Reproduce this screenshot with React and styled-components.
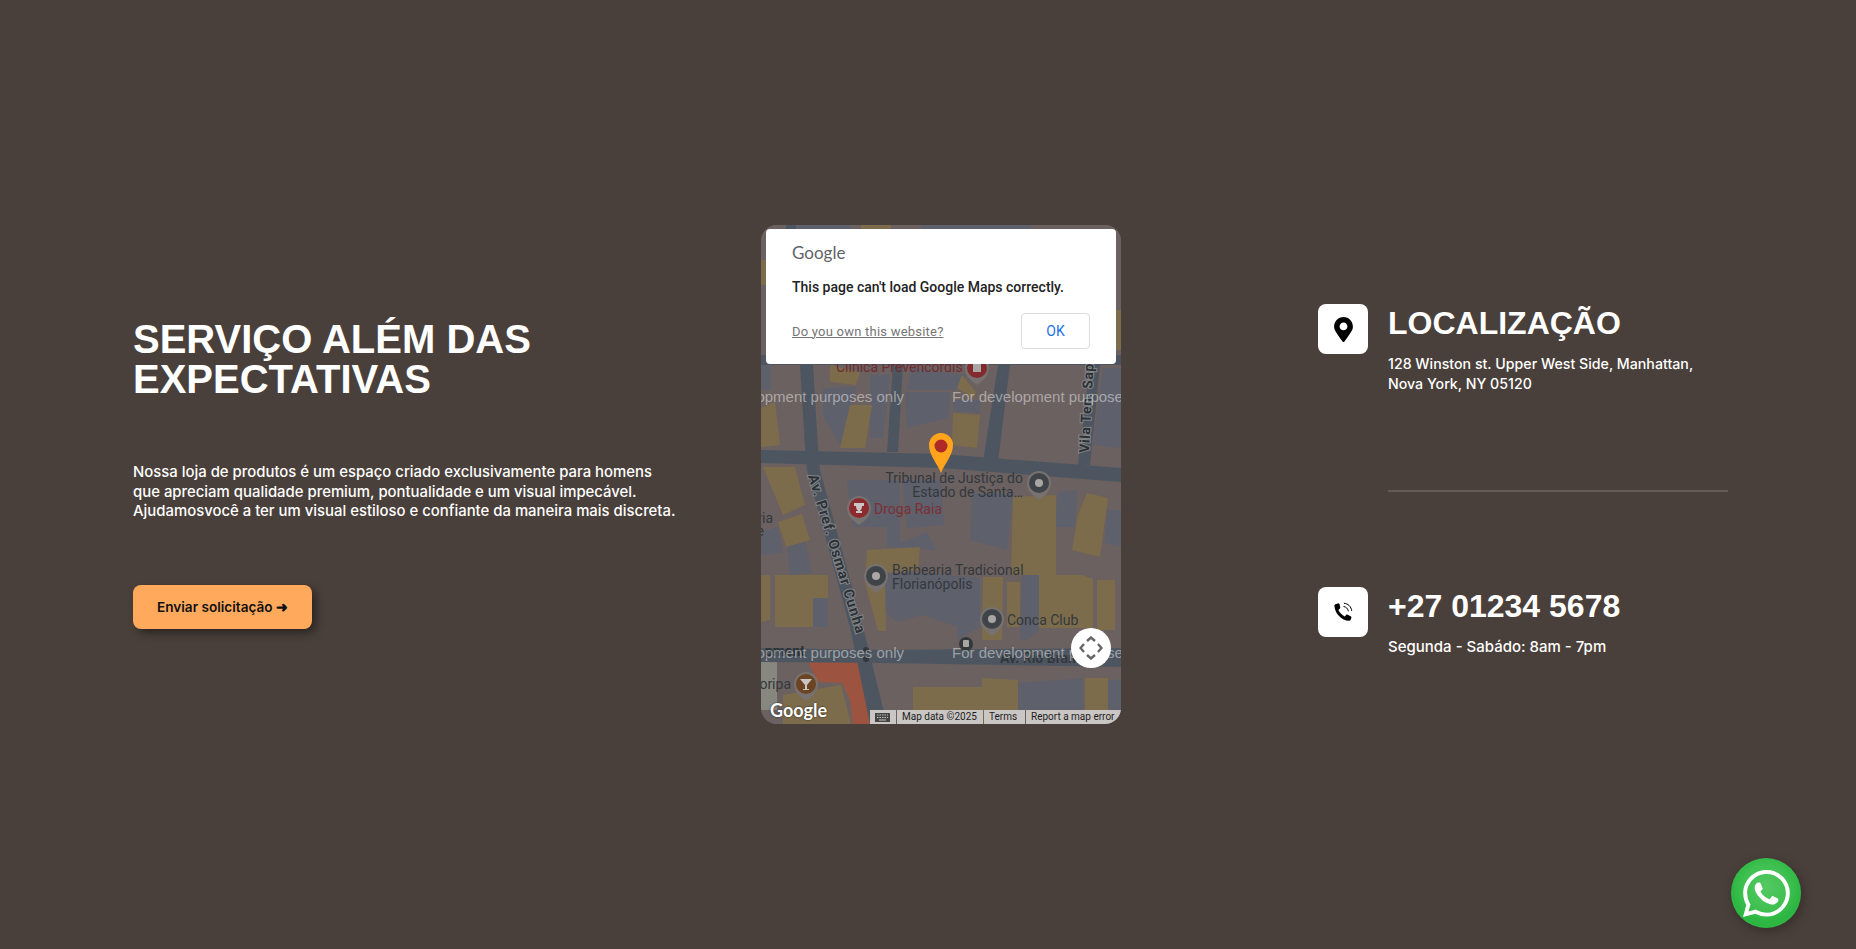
import React from "react";
import styled, { createGlobalStyle } from "styled-components";
import { FaMapMarkerAlt } from "react-icons/fa";
import { BsWhatsapp } from "react-icons/bs";

const Global = createGlobalStyle`
  html, body { margin: 0; padding: 0; background: #4a403b; }
  * { box-sizing: border-box; }
`;

const Page = styled.main`
  height: 949px;
  overflow: hidden;
  display: flex;
  align-items: center;
  padding-left: 133px;
  background: #4a403b;
  color: #fff;
  font-family: Inter, "Open Sans", sans-serif;
  position: relative;
`;

const Intro = styled.section`
  width: 628px;
  flex: none;
  padding-bottom: 1px;
`;

const Headline = styled.h1`
  margin: 0 0 64px;
  font: 700 40px/40px "Liberation Sans", Arial, sans-serif;
  color: #fff;
`;

const Lead = styled.p`
  margin: 0 0 63px;
  width: 600px;
  font-size: 14.9px;
  line-height: 19.5px;
  font-weight: 500;
`;

const Cta = styled.button`
  display: block;
  width: 179px;
  height: 44px;
  padding: 0;
  border: 0;
  border-radius: 8px;
  background: #ffa95c;
  color: #111;
  font: 600 13.6px Inter, sans-serif;
  box-shadow: 4px 4px 10px rgba(0, 0, 0, 0.45);
`;

const MapFrame = styled.div`
  position: relative;
  flex: none;
  width: 360px;
  height: 499px;
  border-radius: 16px;
  overflow: hidden;
  background: #6b6160;
`;

const MapArt = styled.svg`
  display: block;
  width: 360px;
  height: 500px;
`;

const MapLabel = styled.text`
  font-family: Roboto, sans-serif;
  font-size: ${(p) => p.$size || 14}px;
  font-weight: ${(p) => p.$weight || 400};
  letter-spacing: ${(p) => p.$track || 0}px;
  fill: ${(p) => p.$color || "#33383d"};
  stroke: ${(p) => p.$halo || "none"};
  stroke-width: ${(p) => (p.$halo ? 2 : 0)}px;
  paint-order: stroke;
`;

const Watermark = styled.text`
  font-family: "Liberation Sans", Arial, sans-serif;
  font-size: 15px;
  fill: rgba(255, 255, 255, 0.45);
`;

const Dialog = styled.div`
  position: absolute;
  left: 5px;
  top: 4px;
  width: 350px;
  height: 135px;
  padding: 12px 26px 0;
  background: #fff;
  border-radius: 4px;
  font-family: Roboto, sans-serif;
`;

const DialogLogo = styled.div`
  font: 400 17px/24px Lato, "Open Sans", sans-serif;
  color: #5f6368;
`;

const DialogMessage = styled.div`
  margin-top: 12px;
  font-size: 14px;
  line-height: 20px;
  font-weight: 500;
  color: #222;
`;

const DialogFoot = styled.div`
  margin-top: 16px;
  display: flex;
  align-items: center;
  justify-content: space-between;
`;

const DialogLink = styled.a`
  font-size: 13px;
  letter-spacing: 0.22px;
  color: #757575;
  text-decoration: underline;
`;

const OkButton = styled.button`
  width: 69px;
  height: 36px;
  background: #fff;
  border: 1px solid #dadce0;
  border-radius: 4px;
  color: #1a73e8;
  font: 400 14px Roboto, sans-serif;
`;

const MoveControl = styled.div`
  position: absolute;
  left: 310px;
  top: 403px;
  width: 40px;
  height: 40px;
  border-radius: 50%;
  background: #fff;
  display: flex;
  align-items: center;
  justify-content: center;
`;

const MapLogo = styled.div`
  position: absolute;
  left: 9px;
  bottom: 3px;
  font: 700 18px/22px Lato, "Open Sans", sans-serif;
  color: #fff;
  text-shadow: 0 0 2px rgba(0, 0, 0, 0.7);
`;

const Attribution = styled.div`
  position: absolute;
  right: 0;
  bottom: 0;
  height: 14px;
  display: flex;
  gap: 1px;
`;

const AttrCell = styled.div`
  width: ${(p) => p.$w}px;
  padding-left: ${(p) => p.$pad ?? 5}px;
  display: flex;
  align-items: center;
  background: #cac6c3;
  color: #1d1d1d;
  font: 400 10px/14px Roboto, sans-serif;
  white-space: nowrap;
`;

const Contact = styled.section`
  flex: none;
  align-self: stretch;
  width: 410px;
  margin-left: 197px;
  padding-top: 304px;
`;

const Row = styled.div`
  display: flex;
  gap: 20px;
  height: ${(p) => p.$h}px;
`;

const IconBox = styled.div`
  flex: none;
  width: 50px;
  height: 50px;
  border-radius: 8px;
  background: #fff;
  color: #000;
  display: flex;
  align-items: center;
  justify-content: center;
`;

const RowTitle = styled.h2`
  margin: ${(p) => p.$top}px 0 ${(p) => p.$gap}px;
  font: 700 32px/36px "Liberation Sans", Arial, sans-serif;
  color: #fff;
`;

const RowText = styled.p`
  margin: 0;
  font-size: ${(p) => p.$size}px;
  line-height: 19.5px;
  font-weight: 500;
`;

const Divider = styled.hr`
  width: 340px;
  height: 2px;
  margin: 0 0 95px 70px;
  border: 0;
  background: #645b56;
`;

const Whats = styled.a`
  position: absolute;
  left: 1731px;
  top: 858px;
  width: 70px;
  height: 70px;
  border-radius: 50%;
  background: radial-gradient(circle at 50% 42%, #54c962 0%, #3fc051 42%, #2db742 64%);
  color: #fff;
  display: flex;
  align-items: center;
  justify-content: center;
  box-shadow: 2px 3px 12px rgba(0, 0, 0, 0.3);
`;

const yellow = [
  "2,242 34,242 44,280 22,290", "17,297 41,289 49,315 25,322", "14,350 67,350 67,373 52,373 52,402 14,402",
  "0,350 9,350 9,395 0,397", "106,325 159,322 157,345 124,348 125,406 117,406 104,358",
  "252,272 295,270 295,350 321,350 332,354 332,403 278,403 278,350 250,350", "326,268 347,273 339,332 311,325 317,290",
  "336,355 354,355 354,405 336,405", "222,352 242,352 241,415 221,415", "246,357 259,357 259,402 246,402",
  "152,462 221,462 221,453 257,455 257,499 152,499", "324,453 347,453 347,485 324,485", "22,470 80,460 90,499 22,499",
  "69,140 99,147 95,160 69,157", "201,150 215,167 212,173 196,163", "192,188 219,190 216,223 191,220",
  "89,180 111,180 104,223 79,223", "0,183 14,177 19,220 0,222", "0,35 5,35 5,60 0,60", "355,85 360,85 360,125 355,125",
  "100,0 130,0 130,5 100,5",
];
const blue = [
  "86,255 139,255 139,318 166,307 175,325 126,322 126,302 92,302", "141,255 180,255 183,300 146,303",
  "211,268 252,268 246,325 209,315", "297,267 316,265 314,302 294,302", "346,285 360,285 360,322 344,318",
  "26,322 44,317 51,348 29,350", "0,307 17,302 22,328 0,330", "52,373 67,373 67,402 52,402",
  "124,348 166,348 219,353 219,402 196,415 196,402 162,390 136,397 124,387", "261,348 279,348 278,405 266,415 259,415",
  "257,458 322,453 322,485 257,485", "347,455 360,455 360,485 347,485", "62,163 96,162 79,220 62,190",
  "109,150 129,150 122,213 109,213", "144,167 189,167 187,193 146,203", "192,175 219,175 219,188 192,186",
  "342,143 360,143 360,223 332,220", "150,143 205,150 195,165 146,165", "0,140 10,140 10,165 0,165",
  "30,0 90,0 90,5 30,5", "160,0 270,0 270,5 160,5",
];
const roads = [
  "0,225 180,229 360,243 360,257 180,243 0,238", "0,423 120,425 360,423 360,442 120,438 0,437",
  "39,140 52,140 57,223 59,245 102,402 126,499 109,499 89,402 46,245 44,223",
  "132,140 142,140 137,227 126,227", "237,140 249,140 237,237 222,237", "329,140 339,140 329,240 317,240",
  "0,130 360,130 360,140 0,140", "25,0 35,0 35,5 25,5",
];

const Pin = ({ x, y, fill = "#3f4449", children }) => (
  <g transform={`translate(${x} ${y})`}>
    <path d="M0 17 C-3 14 -12 10 -12 0 A12 12 0 1 1 12 0 C12 10 3 14 0 17Z" fill="#77716f" />
    <circle r="10" fill={fill} />
    {children || <circle r="4" fill="#aaa6a3" />}
  </g>
);

const Chevrons = () => (
  <svg width="24" height="24" viewBox="0 0 24 24" fill="none" stroke="#666" strokeWidth="2.4">
    <path d="M8 5 12 1.500 16 5M8 19 12 22.500 16 19M5 8 1.500 12 5 16M19 8 22.500 12 19 16" />
  </svg>
);

const PhoneGlyph = () => (
  <svg width="24" height="24" viewBox="0 0 24 24">
    <path
      d="M19.6 16.2l-3-1.5c-.5-.3-1.1-.2-1.5.2l-1.3 1.5c-2.7-1.4-5.2-3.9-6.4-6.5l1.5-1.3c.4-.4.5-1 .3-1.5L8.5 4.1c-.3-.6-1-.9-1.6-.7L4.4 4.3c-.7.3-1.1.9-1 1.6C4 13.5 10.400 20.200 18.100 20.800c.7 0 1.300-.4 1.600-1l.7-2c.2-.6-.2-1.300-.8-1.600z"
      fill="#000"
    />
    <path d="M12.500 6.500c2.500.2 4.600 2.300 4.800 4.800M13 3.300c4 .2 7.400 3.500 7.700 7.600" fill="none" stroke="#000" strokeWidth="1" />
  </svg>
);

const GoogleMap = () => (
  <MapArt viewBox="0 0 360 500">
    <rect width="360" height="500" fill="#6b6160" />
    {blue.map((pts) => <polygon key={pts} points={pts} fill="#5e606c" />)}
    {yellow.map((pts) => <polygon key={pts} points={pts} fill="#7c6c4b" />)}
    <polygon points="0,435 16,435 16,485 0,485" fill="#87877f" />
    <polygon points="47,437 101,437 109,499 92,499 89,475 81,458 57,457" fill="#9c5440" />
    {roads.map((pts) => <polygon key={pts} points={pts} fill="#4d5660" />)}

    <MapLabel x="75" y="147" $color="#6f2b30">Clínica Prevencordis</MapLabel>
    <Pin x="216" y="143" fill="#832a2e"><rect x="-4" y="-4" width="8" height="8" fill="#aaa6a3" /></Pin>
    <MapLabel x="262" y="258" textAnchor="end">Tribunal de Justiça do</MapLabel>
    <MapLabel x="262" y="272" textAnchor="end">Estado de Santa…</MapLabel>
    <Pin x="278" y="258" />
    <Pin x="98" y="283" fill="#8c2a30"><path d="M-5 -5H5V-2H3C3 2 1 2 1 3H3V5H-3V3H-1C-1 2 -3 2 -3 -2H-5Z" fill="#c9c5c2" /></Pin>
    <MapLabel x="113" y="289" $color="#7c2f35">Droga Raia</MapLabel>
    <MapLabel x="131" y="350">Barbearia Tradicional</MapLabel>
    <MapLabel x="131" y="364">Florianópolis</MapLabel>
    <Pin x="115" y="351" />
    <MapLabel x="246" y="400">Conca Club</MapLabel>
    <Pin x="231" y="394" />
    <MapLabel x="30" y="464" textAnchor="end">oripa</MapLabel>
    <Pin x="45" y="459" fill="#6b4423"><path d="M-6 -5H6L1 1V5H3V6H-3V5H-1V1Z" fill="#c9c5c2" /></Pin>
    <MapLabel x="12" y="298" textAnchor="end">ria</MapLabel>
    <MapLabel x="3" y="311" textAnchor="end">e</MapLabel>
    <circle cx="205" cy="419" r="7" fill="#33383d" />
    <rect x="202" y="415" width="6" height="7" rx="1" fill="#aaa6a3" />
    <circle cx="105" cy="425" r="3" fill="#33383d" />
    <circle cx="105" cy="434" r="3" fill="#33383d" />
    <MapLabel x="239" y="438" $weight="700" $halo="#4d5660">Av. Rio Branco</MapLabel>
    <MapLabel x="44" y="431" textAnchor="end" $weight="700" $color="#2c3136">pment</MapLabel>
    <MapLabel x="0" y="0" $weight="700" $size={14.5} $track={0.9} $color="#2c3136" $halo="#85878a" transform="translate(47 251) rotate(73)">Av. Pref. Osmar Cunha</MapLabel>
    <MapLabel x="0" y="0" $weight="700" $size={14} $track={0.6} $color="#2c3136" $halo="#85878a" transform="translate(328 228) rotate(-87)">Vila Ten. Sapucaia</MapLabel>

    <Watermark x="143" y="177" textAnchor="end">For development purposes only</Watermark>
    <Watermark x="191" y="177">For development purposes only</Watermark>
    <Watermark x="143" y="433" textAnchor="end">For development purposes only</Watermark>
    <Watermark x="191" y="433">For development purposes only</Watermark>

    <path d="M180 248 C176 238 168 230 168 220 A12 12 0 1 1 192 220 C192 230 184 238 180 248Z" fill="#ffa41c" />
    <circle cx="180" cy="221" r="6.500" fill="#ad2a26" />
  </MapArt>
);

export default function App() {
  return (
    <Page>
      <Global />
      <Intro>
        <Headline>SERVIÇO ALÉM DAS<br />EXPECTATIVAS</Headline>
        <Lead>
          Nossa loja de produtos é um espaço criado exclusivamente para homens<br />
          que apreciam qualidade premium, pontualidade e um visual impecável.<br />
          Ajudamosvocê a ter um visual estiloso e confiante da maneira mais discreta.
        </Lead>
        <Cta>Enviar solicitação ➜</Cta>
      </Intro>

      <MapFrame>
        <GoogleMap />
        <MapLogo>Google</MapLogo>
        <Attribution>
          <AttrCell $w={26} $pad={5}>
            <svg width="15" height="9" viewBox="0 0 15 9"><path d="M0 0H15V9H0Z" fill="#444" /><path d="M2 2H13M2 4.500H13" stroke="#cac6c3" strokeDasharray="1.500 1" /><path d="M4 7H11" stroke="#cac6c3" /></svg>
          </AttrCell>
          <AttrCell $w={86}>Map data ©2025</AttrCell>
          <AttrCell $w={41}>Terms</AttrCell>
          <AttrCell $w={95}>Report a map error</AttrCell>
        </Attribution>
        <MoveControl><Chevrons /></MoveControl>
        <Dialog>
          <DialogLogo>Google</DialogLogo>
          <DialogMessage>This page can't load Google Maps correctly.</DialogMessage>
          <DialogFoot>
            <DialogLink>Do you own this website?</DialogLink>
            <OkButton>OK</OkButton>
          </DialogFoot>
        </Dialog>
      </MapFrame>

      <Contact>
        <Row $h={186}>
          <IconBox><FaMapMarkerAlt size={25} /></IconBox>
          <div>
            <RowTitle $top={1} $gap={13}>LOCALIZAÇÃO</RowTitle>
            <RowText $size={14.2}>128 Winston st. Upper West Side, Manhattan,<br />Nova York, NY 05120</RowText>
          </div>
        </Row>
        <Divider />
        <Row $h={80}>
          <IconBox><PhoneGlyph /></IconBox>
          <div>
            <RowTitle $top={1} $gap={13}>+27 01234 5678</RowTitle>
            <RowText $size={15}>Segunda - Sabádo: 8am - 7pm</RowText>
          </div>
        </Row>
      </Contact>

      <Whats><BsWhatsapp size={47} /></Whats>
    </Page>
  );
}
